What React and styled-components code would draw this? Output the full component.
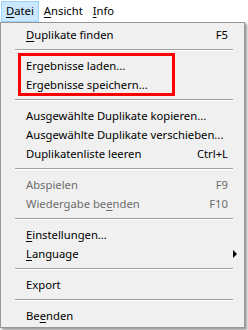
import React from 'react';
import styled, { createGlobalStyle } from 'styled-components';

const GlobalStyle = createGlobalStyle`
  html, body {
    margin: 0;
    padding: 0;
    background: #ffffff;
  }
  body {
    font-family: 'Noto Sans', 'Open Sans', sans-serif;
    font-size: 11.25px;
    color: #000;
  }
`;

const menus = [
  { label: 'Datei', key: 0, active: true },
  { label: 'Ansicht', key: 0 },
  { label: 'Info', key: 0 },
];

const entries = [
  { label: 'Duplikate finden', key: 0, shortcut: 'F5' },
  { sep: true },
  { group: [{ label: 'Ergebnisse laden...' }, { label: 'Ergebnisse speichern...' }] },
  { sep: true },
  { label: 'Ausgewählte Duplikate kopieren...' },
  { label: 'Ausgewählte Duplikate verschieben...' },
  { label: 'Duplikatenliste leeren', shortcut: 'Ctrl+L' },
  { sep: true },
  { label: 'Abspielen', shortcut: 'F9', disabled: true },
  { label: 'Wiedergabe beenden', key: 13, shortcut: 'F10', disabled: true },
  { sep: true },
  { label: 'Einstellungen...', key: 0 },
  { label: 'Language', key: 0, submenu: true },
  { sep: true },
  { label: 'Export' },
  { sep: true },
  { label: 'Beenden', key: 2 },
];

const Label = ({ text, at }) => {
  if (at === undefined) return text;
  return (
    <>
      {text.slice(0, at)}
      <Key>{text[at]}</Key>
      {text.slice(at + 1)}
    </>
  );
};

const MenuEntry = ({ item }) => (
  <Item $disabled={item.disabled}>
    <ItemText>
      <Label text={item.label} at={item.key} />
    </ItemText>
    {item.shortcut && <Shortcut>{item.shortcut}</Shortcut>}
    {item.submenu && <Arrow />}
  </Item>
);

const App = () => (
  <Window>
    <GlobalStyle />
    <MenuBar>
      {menus.map((m) => (
        <MenuTitle key={m.label} $active={m.active}>
          <Label text={m.label} at={m.key} />
        </MenuTitle>
      ))}
    </MenuBar>
    <Content />
    <Dropdown>
      {entries.map((e, i) => {
        if (e.sep) return <Separator key={i} />;
        if (e.group)
          return (
            <Group key={i}>
              {e.group.map((g) => (
                <MenuEntry key={g.label} item={g} />
              ))}
              <Annotation />
            </Group>
          );
        return <MenuEntry key={i} item={e} />;
      })}
    </Dropdown>
  </Window>
);

const Window = styled.div`
  position: relative;
  width: 248px;
  height: 330px;
  overflow: hidden;
  background: #ffffff;
`;

const MenuBar = styled.div`
  display: flex;
  height: 22px;
  padding: 1px 1px 0;
  box-sizing: border-box;
  background: #ffffff;
`;

const MenuTitle = styled.div`
  height: 19px;
  line-height: 18px;
  padding: 0 4px;
  border: 1px solid ${(p) => (p.$active ? '#99d1ff' : 'transparent')};
  background: ${(p) => (p.$active ? '#cce8ff' : 'transparent')};
`;

const Content = styled.div`
  height: 308px;
  background: #f4f4f4;
`;

const Key = styled.span`
  text-decoration: underline;
  text-underline-offset: 2px;
`;

const Dropdown = styled.div`
  position: absolute;
  top: 22px;
  left: 0;
  width: 245px;
  box-sizing: border-box;
  padding: 2px;
  background: #f0f0f0;
  border: 1px solid #979797;
  box-shadow: 2px 2px 2px rgba(0, 0, 0, 0.35);
`;

const Item = styled.div`
  display: flex;
  align-items: center;
  height: 19px;
  padding: 0 14px 0 23px;
  color: ${(p) => (p.$disabled ? '#6d6d6d' : '#000000')};
  white-space: nowrap;
`;

const ItemText = styled.span`
  flex: 1;
`;

const Shortcut = styled.span`
  margin-left: 20px;
`;

const Arrow = styled.span`
  width: 0;
  height: 0;
  margin-right: -9px;
  border-top: 4px solid transparent;
  border-bottom: 4px solid transparent;
  border-left: 4px solid #000;
`;

const Separator = styled.div`
  height: 1px;
  margin: 5px 9px 5px 12px;
  background: #a0a0a0;
  border-bottom: 1px solid #ffffff;
`;

const Group = styled.div`
  position: relative;
`;

const Annotation = styled.div`
  position: absolute;
  left: 15px;
  top: -3px;
  width: 157px;
  height: 43px;
  box-sizing: border-box;
  border: 3px solid #ff0000;
`;

export default App;
